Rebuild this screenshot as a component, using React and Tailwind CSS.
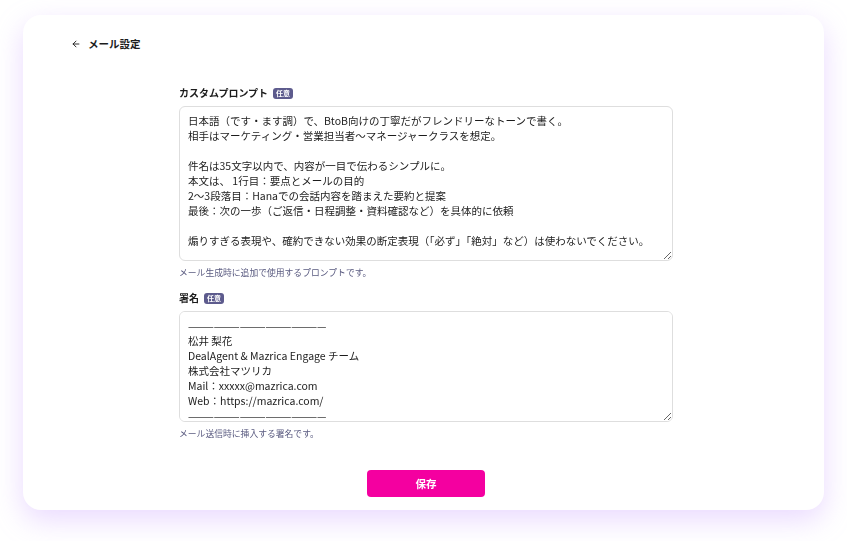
import { ArrowLeft } from "lucide-react";

const jp = { fontFamily: '"Noto Sans CJK JP", "Noto Sans", sans-serif' };

const promptText = `日本語（です・ます調）で、BtoB向けの丁寧だがフレンドリーなトーンで書く。
相手はマーケティング・営業担当者〜マネージャークラスを想定。

件名は35文字以内で、内容が一目で伝わるシンプルに。
本文は、 1行目：要点とメールの目的
2〜3段落目：Hanaでの会話内容を踏まえた要約と提案
最後：次の一歩（ご返信・日程調整・資料確認など）を具体的に依頼

煽りすぎる表現や、確約できない効果の断定表現（「必ず」「絶対」など）は使わないでください。`;

const signatureText = `————————————————
松井 梨花
DealAgent & Mazrica Engage チーム
株式会社マツリカ
Mail：xxxxx@mazrica.com
Web：https://mazrica.com/
————————————————`;

// small "optional" tag next to a field label
const OptionalBadge = () => (
  <span className="ml-[5px] inline-flex h-[11px] items-center rounded-[3px] bg-[#5d5b8d] px-[3px] text-[7px] font-bold leading-none text-white">
    任意
  </span>
);

const Field = ({ label, value, height, help, className }) => (
  <div className={className}>
    <div className="flex h-[14px] items-center text-[10px] font-bold leading-[14px] text-[#1c1c1c]">
      {label}
      <OptionalBadge />
    </div>
    <textarea
      defaultValue={value}
      spellCheck={false}
      className={`mt-[6px] block w-full rounded-[6px] border border-[#dedede] bg-white px-[8px] pt-[6px] text-[10.5px] leading-[15px] text-[#1c1c1c] outline-none ${height}`}
      style={jp}
    />
    <p className="mt-[5px] text-[8.8px] leading-[13px] text-[#5a5b80]">{help}</p>
  </div>
);

const App = () => {
  return (
    <div className="min-h-[541px] bg-white px-[23px] pt-[15px] pb-[31px]" style={jp}>
      <div className="h-[495px] rounded-[18px] bg-white shadow-[0_10px_28px_rgba(196,150,255,0.35)]">
        {/* header */}
        <div className="flex h-[14px] translate-y-[22px] items-center pl-[48px]">
          <ArrowLeft size={10} strokeWidth={2.2} className="text-[#1c1c1c]" />
          <span className="ml-[7px] text-[10.5px] font-bold leading-[14px] text-[#1c1c1c]">メール設定</span>
        </div>

        {/* form */}
        <div className="pl-[156px] pt-[57px]">
          <div className="w-[494px]">
            <Field
              label="カスタムプロンプト"
              value={promptText}
              height="h-[155px]"
              help="メール生成時に追加で使用するプロンプトです。"
            />
            <Field
              label="署名"
              value={signatureText}
              height="h-[111px]"
              help="メール送信時に挿入する署名です。"
              className="mt-[12px]"
            />
            <div className="mt-[30px] flex justify-center">
              <button className="h-[27px] w-[118px] rounded-[4px] bg-[#f400a0] text-[10.5px] font-bold text-white">
                保存
              </button>
            </div>
          </div>
        </div>
      </div>
    </div>
  );
};

export default App;
